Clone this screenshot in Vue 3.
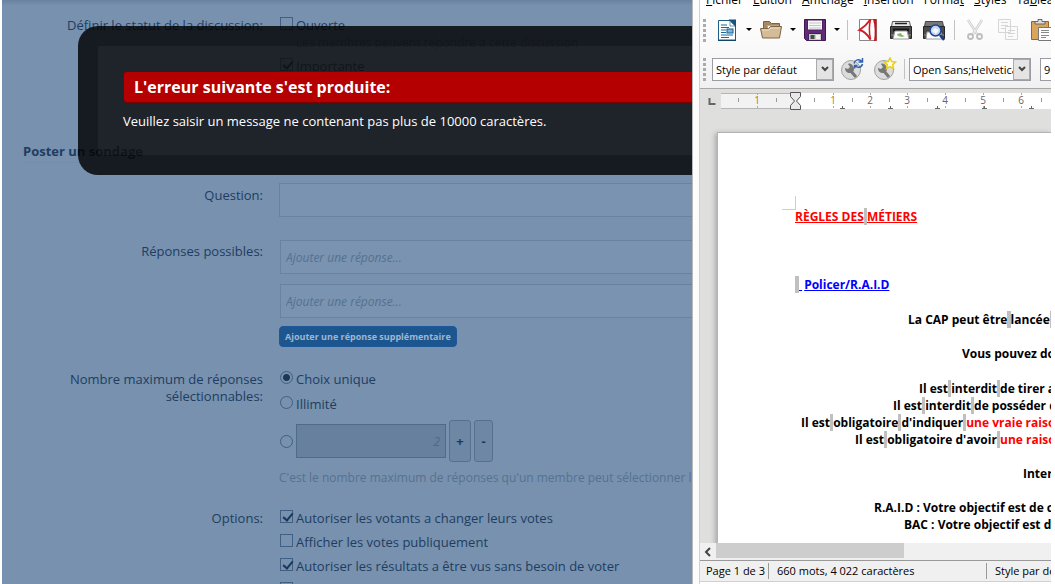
<script setup>
import { ref } from 'vue'

const statusOpen = ref(false)
const statusSticky = ref(true)
const maxMode = ref('single')

const options = ref([
  { id: 'change', text: 'Autoriser les votants a changer leurs votes', on: true },
  { id: 'public', text: 'Afficher les votes publiquement', on: false },
  { id: 'view', text: 'Autoriser les résultats a être vus sans besoin de voter', on: true },
  { id: 'close', text: '', on: false }
])

const menus = [
  ['', 'F', 'ichier'],
  ['', 'É', 'dition'],
  ['', 'A', 'ffichage'],
  ['', 'I', 'nsertion'],
  ['Forma', 't', ''],
  ['', 'S', 'tyles'],
  ['Ta', 'b', 'leau']
]

const rulerNumbers = [
  { x: 57, n: 1, warm: true },
  { x: 133, n: 1, warm: true },
  { x: 170, n: 2 },
  { x: 207, n: 3 },
  { x: 245, n: 4 },
  { x: 283, n: 5 },
  { x: 321, n: 6 }
]
const rulerTicks = [38, 76, 114, 152, 189, 227, 265, 303, 341]
const rulerTabs = [142, 190, 237, 284, 331]

const N = '\u00a0'
const lines = [
  { indent: 113, parts: [['La CAP peut être'], [N, 'nb'], ['lancée'], [N, 'nb']] },
  { blank: 'short' },
  { indent: 167, parts: [['Vous pouvez donc']] },
  { blank: 'tall' },
  { indent: 124, parts: [['Il est'], [N, 'nb'], ['interdit'], [N, 'nb'], ['de tirer a']] },
  { indent: 98, parts: [['Il est'], [N, 'nb'], ['interdit'], [N, 'nb'], ['de posséder d']] },
  { indent: 6, parts: [['Il est'], [N, 'nb'], ['obligatoire'], [N, 'nb'], ["d'indiquer"], [N, 'nb'], ['une vraie raison', 'red']] },
  { indent: 60, parts: [['Il est'], [N, 'nb'], ["obligatoire d'avoir"], [N, 'nb'], ['une raison', 'red']] },
  { blank: 'short' },
  { indent: 228, parts: [['Interdit']] },
  { blank: 'short' },
  { indent: 79, parts: [['R.A.I.D : Votre objectif est de c']] },
  { indent: 109, parts: [['BAC : Votre objectif est de']] }
]
</script>

<template>
  <main class="desktop">
    <section class="forum">
      <form class="form" @submit.prevent>
        <div class="row status">
          <span class="label">Définir le statut de la discussion:</span>
          <div class="field">
            <label class="choice"><input v-model="statusOpen" type="checkbox" />Ouverte</label>
            <p class="hint inset">Les membres peuvent répondre à cette discussion</p>
            <label class="choice sticky"><input v-model="statusSticky" type="checkbox" />Importante</label>
          </div>
        </div>

        <h3 class="heading">Poster un sondage</h3>

        <div class="row question">
          <label class="label drop" for="question">Question:</label>
          <div class="field bleed"><input id="question" class="text" type="text" /></div>
        </div>

        <div class="row answers">
          <label class="label drop" for="answer1">Réponses possibles:</label>
          <div class="field stack">
            <input id="answer1" class="text" type="text" placeholder="Ajouter une réponse..." />
            <input class="text" type="text" placeholder="Ajouter une réponse..." aria-label="Réponse 2" />
            <button type="button" class="add">Ajouter une réponse supplémentaire</button>
          </div>
        </div>

        <div class="row maximum">
          <span class="label">Nombre maximum de réponses sélectionnables:</span>
          <div class="field choices">
            <label class="choice"><input v-model="maxMode" type="radio" value="single" />Choix unique</label>
            <label class="choice"><input v-model="maxMode" type="radio" value="all" />Illimité</label>
            <div class="spin">
              <input v-model="maxMode" type="radio" value="some" aria-label="Nombre choisi" />
              <input class="text number" type="text" value="2" disabled aria-label="Nombre maximum" />
              <button type="button" class="step plus">+</button>
              <button type="button" class="step minus">-</button>
            </div>
            <p class="hint">C'est le nombre maximum de réponses qu'un membre peut sélectionner lorsqu'il vote.</p>
          </div>
        </div>

        <div class="row options">
          <span class="label">Options:</span>
          <div class="field optlist">
            <label v-for="o in options" :key="o.id" class="choice">
              <input v-model="o.on" type="checkbox" />{{ o.text }}
            </label>
          </div>
        </div>
      </form>

      <div class="overlay" role="alertdialog" aria-labelledby="err-title">
        <div class="overlay-body">
          <h2 id="err-title" class="error-title">L'erreur suivante s'est produite:</h2>
          <p class="error-text">Veuillez saisir un message ne contenant pas plus de 10000 caractères.</p>
        </div>
      </div>
    </section>

    <section class="writer">
      <header class="chrome">
        <nav class="menubar">
          <a v-for="m in menus" :key="m.join('')" href="#">{{ m[0] }}<u>{{ m[1] }}</u>{{ m[2] }}</a>
        </nav>

        <div class="toolbar">
          <span class="grip"></span>
          <button class="tool" aria-label="Nouveau">
            <svg viewBox="0 0 24 24"><path d="M3.500 2.500h12l5 4.500v15h-17z" fill="#fff" stroke="#1f5c85" /><path d="M13.500 1.500h7.500v8z" fill="#165379" /><path d="M15 3v5h5z" fill="#fff" stroke="#2a6c98" stroke-width=".7" /><path d="M6 7h6M6 9.500h8M6 12h5M6 14.500h5M6 17h12M6 19.500h8" stroke="#176aa1" stroke-width="1.200" /><rect x="12" y="11" width="6" height="4" fill="#7fb6dc" stroke="#145b8c" /><path d="M3 22.500h18" stroke="#124668" /></svg>
          </button>
          <svg class="arrow" viewBox="0 0 8 4"><path d="M1 0h6L4 3z" /></svg>
          <button class="tool" aria-label="Ouvrir">
            <svg viewBox="0 0 24 24"><path d="M4.500 18V3.500h6l2 2h8V18z" fill="#a88860" stroke="#7e6343" /><path d="M8.500 7.500h11v5h-11z" fill="#fff" stroke="#bda57f" /><path d="M1.500 10.500h8l2-2h11l-2 11.500h-17z" fill="#d3bc97" stroke="#806544" /><path d="M3 12h7l2-2h9" fill="none" stroke="#eadcc4" /></svg>
          </button>
          <svg class="arrow" viewBox="0 0 8 4"><path d="M1 0h6L4 3z" /></svg>
          <button class="tool" aria-label="Enregistrer">
            <svg viewBox="0 0 24 24"><path d="M1.500 1.500h21v21h-19l-2-2z" fill="#612c77" stroke="#3e164f" /><path d="M4.500 2h15v10h-15z" fill="#f8f8f8" stroke="#4e2160" /><path d="M6 5h12M6 7.500h12M6 10h12" stroke="#c5c5c5" /><path d="M5.500 15.500h13v7h-13z" fill="#c9ccc6" stroke="#45205a" /><path d="M7.500 17h4v4h-4z" fill="#3b5140" /><path d="M13 17h4v4h-4z" fill="#f3f4ef" /></svg>
          </button>
          <svg class="arrow" viewBox="0 0 8 4"><path d="M1 0h6L4 3z" /></svg>
          <span class="sep"></span>
          <button class="tool lead" aria-label="Exporter au format PDF">
            <svg viewBox="0 0 24 24"><path d="M3.500 1.500h17v21h-17z" fill="#fff" stroke="#8d8585" /><path d="M17 1h3.500v22H18c1-7 1-15-1-22z" fill="#c7161d" /><path d="M14.500 1.500C12 5 8 9 3.500 12c4 1 8 4.500 11 9.500" fill="none" stroke="#d01c24" stroke-width="2" /><path d="M14.500 1.500c-1.500 6-1.500 13 0 20" fill="none" stroke="#d01c24" stroke-width="1.500" /></svg>
          </button>
          <button class="tool wide" aria-label="Imprimer">
            <svg viewBox="0 0 24 24"><path d="M3.500 3.500h17l1 5h-19z" fill="#e8e8e8" stroke="#555" /><path d="M6 5.500h12" stroke="#222" stroke-width="1.500" /><path d="M1.500 8.500h21v12h-21z" fill="#4a4b49" stroke="#252525" /><path d="M4 10.500h16v3H4z" fill="#161616" /><path d="M2 17h20" stroke="#929292" /><path d="M6 13h12l2 8H4z" fill="#fff" stroke="#999" /><path d="m8 16 4-1 1 2 3 1-3 1-4-1z" fill="#7dbb62" /></svg>
          </button>
          <button class="tool wide" aria-label="Aperçu">
            <svg viewBox="0 0 24 24"><path d="M3.500 3.500h17l1 5h-19z" fill="#777" stroke="#444" /><path d="M1.500 8.500h21v12h-21z" fill="#4a4b49" stroke="#252525" /><path d="M2 17h20" stroke="#929292" /><path d="M5 14h14l1 7H4z" fill="#fff" stroke="#999" /><path d="m18 17 4 5" stroke="#183b80" stroke-width="2.500" /><circle cx="13.500" cy="12.500" r="5.500" fill="#c4d9ed" stroke="#1e4597" stroke-width="1.500" /><path d="m10 13 3-3 4 2-3 4z" fill="#f4f8fb" /></svg>
          </button>
          <span class="sep"></span>
          <button class="tool lead" aria-label="Couper" disabled>
            <svg viewBox="0 0 24 24" fill="none"><path d="m5 2 9 14M19 2l-9 14" stroke="#cfcfcf" stroke-width="2.500" /><path d="m5 2 9 14M19 2l-9 14" stroke="#f1f1f1" /><circle cx="7.500" cy="18.500" r="2.500" stroke="#bdbdbd" stroke-width="1.800" /><circle cx="16.500" cy="18.500" r="2.500" stroke="#bdbdbd" stroke-width="1.800" /></svg>
          </button>
          <button class="tool wide" aria-label="Copier" disabled>
            <svg viewBox="0 0 24 24"><path d="M2.500 1.500h12v13h-12zM9.500 8.500h12v13h-12z" fill="#fafafa" stroke="#d6d6d6" /><path d="M5 4.500h7M5 7.500h7M5 10.500h4M12 12.500h7M12 15.500h7M12 18.500h5" stroke="#d6d6d6" /></svg>
          </button>
          <button class="tool wide" aria-label="Coller">
            <svg viewBox="0 0 24 24"><path d="M2.500 3.500h17v18h-17z" fill="#d9a45c" stroke="#97642a" /><path d="M6 5V3.500h3v-2h4v2h3V6H6z" fill="#ddd" stroke="#666" /><path d="M9.500 9.500h13v13h-13z" fill="#fff" stroke="#777" /><path d="M12 12.500h8M12 14.500h8M12 17.500h8M12 19.500h5" stroke="#888" /></svg>
          </button>
        </div>

        <div class="toolbar second">
          <span class="grip"></span>
          <span class="combo">
            <select aria-label="Style de paragraphe"><option>Style par défaut</option></select>
            <span class="drop-button"><svg viewBox="0 0 8 6"><path d="m1 1 3 3 3-3" /></svg></span>
          </span>
          <button class="tool" aria-label="Actualiser le style">
            <svg viewBox="0 0 24 24"><circle cx="11" cy="13" r="9.500" fill="#dcdcdc" stroke="#a2a2a2" /><path d="m10 13 6 7" stroke="#777" stroke-width="3" /><path d="M5 11c0 3 2 5 5 5 4 0 5-4 3-7-1-2-3-3-5-2l2 3-2 2z" fill="#777" /><path d="M14 6.500c1-4 5-5 8-2M22.500 1v4h-4M22.500 7c-1 4-5 4-8 2M14.500 11.500V8.500h3" fill="none" stroke="#2e63b0" stroke-width="1.500" /></svg>
          </button>
          <button class="tool wide" aria-label="Nouveau style">
            <svg viewBox="0 0 24 24"><circle cx="11" cy="13" r="9.500" fill="#dcdcdc" stroke="#a2a2a2" /><path d="m10 13 6 7" stroke="#777" stroke-width="3" /><path d="M5 11c0 3 2 5 5 5 4 0 5-4 3-7-1-2-3-3-5-2l2 3-2 2z" fill="#777" /><path d="m17 1 1.700 3.500 4 .500-3 2.600.8 4-3.500-2-3.500 2 .8-4-3-2.600 4-.500z" fill="#fffde8" stroke="#e8cf13" stroke-width="1.500" /></svg>
          </button>
          <span class="sep"></span>
          <span class="combo font">
            <select aria-label="Police"><option>Open Sans;Helvetica</option></select>
            <span class="drop-button"><svg viewBox="0 0 8 6"><path d="m1 1 3 3 3-3" /></svg></span>
          </span>
          <span class="combo">
            <select aria-label="Taille"><option>9</option></select>
          </span>
        </div>
      </header>

      <div class="ruler">
        <svg width="700" height="24">
          <path d="M9.500 9v6h6" fill="none" stroke="#666" stroke-width="2" />
          <rect x="21" y="4" width="75" height="15" fill="#f2f2f2" />
          <path d="M21 4.500h75M21 19.500h75" stroke="#b5b5b5" />
          <rect x="96" y="4" width="604" height="16" fill="#fff" />
          <path v-for="t in rulerTicks" :key="'t' + t" :d="`M${t}.5 9v4`" stroke="#999" />
          <path v-for="n in rulerNumbers" :key="'m' + n.x" :d="`M${n.x}.5 4v2M${n.x}.5 17v2`" stroke="#aaa" />
          <path v-for="t in rulerTabs" :key="'b' + t" :d="`M${t}.5 17v3M${t - 2} 19.500h5`" stroke="#666" />
          <text v-for="n in rulerNumbers" :key="n.x" :x="n.x" y="15" :class="{ warm: n.warm }">{{ n.n }}</text>
          <path d="M90.500 3.500h10v4l-4 4.500 4 4.500v4h-10v-4l4-4.500-4-4.500z" fill="#e9e9e9" stroke="#555" />
        </svg>
      </div>

      <div class="canvas">
        <article class="page">
          <i class="corner"></i>
          <h1 class="line title"><span>RÈGLES DES<b class="nb">&nbsp;</b>MÉTIERS</span></h1>
          <p class="line link"><b class="nb wide-nb">&nbsp;</b><a href="#">&nbsp;</a><a class="policer" href="#">Policer/R.A.I.D</a></p>
          <template v-for="(l, i) in lines" :key="i">
            <div v-if="l.blank" :class="['blank', l.blank]"></div>
            <p v-else class="line" :style="{ paddingLeft: l.indent + 'px' }"><span v-for="(p, k) in l.parts" :key="k" :class="p[1]">{{ p[0] }}</span></p>
          </template>
        </article>
      </div>

      <div class="scrollbar">
        <button aria-label="Défiler à gauche"><svg viewBox="0 0 8 10"><path d="M6 1 2 5l4 4" /></svg></button>
        <span class="thumb"></span>
      </div>
      <footer class="statusbar">
        <span class="pages">Page 1 de 3</span>
        <span class="words">660 mots, 4 022 caractères</span>
        <span class="style">Style par défaut</span>
      </footer>
    </section>
  </main>
</template>

<style>
body { background: #fff; }
</style>

<style scoped>
* { box-sizing: border-box; }
h1, h2, h3, p { margin: 0; }
button { padding: 0; font-family: inherit; }

.desktop {
  display: grid;
  grid-template-columns: 690fr 359fr;
  height: 100vh;
  padding: 0 4px 0 2px;
  overflow: hidden;
  font-family: "Open Sans", "Noto Sans", sans-serif;
}

/* forum form */
.forum {
  position: relative;
  min-width: 0;
  overflow: hidden;
  background: linear-gradient(#68829f, #7791af 6px);
  color: #1f3d60;
  font-size: 13px;
  line-height: 17px;
}
.form { padding-top: 17px; }
.row {
  display: grid;
  grid-template-columns: 261px 1fr;
  column-gap: 16px;
}
.label { padding-left: 60px; text-align: right; }
.drop { padding-top: 4px; }
.answers .drop { padding-top: 3px; }
.field { min-width: 0; }
.bleed { margin-right: -2px; }
.choice { display: flex; gap: 3px; height: 17px; white-space: nowrap; }
input[type="checkbox"], input[type="radio"] {
  appearance: none;
  flex: none;
  position: relative;
  width: 13px;
  height: 13px;
  margin: 0 0 0 1px;
  border: 1px solid #3f5f84;
}
input[type="radio"] { border-radius: 50%; }
input[type="checkbox"]:checked::after {
  content: "";
  position: absolute;
  left: 4px;
  top: 0;
  width: 4px;
  height: 8px;
  border: solid #1b3859;
  border-width: 0 2px 2px 0;
  transform: rotate(40deg);
}
input[type="radio"]:checked { background: radial-gradient(circle, #1b3859 3px, transparent 4px); }
.hint { font-size: 12px; line-height: 16px; color: #56718f; white-space: nowrap; }
.inset { padding: 1px 0 0 17px; }
.sticky { margin-top: 7px; }
.status { height: 126px; }
.heading {
  margin-left: 21px;
  padding-bottom: 2px;
  border-bottom: 1px solid #738dab;
  font-size: 13px;
  line-height: 17px;
  font-weight: 700;
}
.question { margin-top: 20px; }
.answers { margin-top: 23px; }
.text {
  display: block;
  width: 100%;
  height: 34px;
  padding: 0 5px;
  border: 1px solid #6882a0;
  background: #7993b1;
  color: #1f3d60;
  font-family: inherit;
  font-size: 12px;
}
.text::placeholder { color: #56718f; font-style: italic; opacity: 1; }
.stack { display: flex; flex-direction: column; gap: 10px; }
.stack .text { margin-left: 1px; }
.add {
  align-self: flex-start;
  height: 21px;
  margin-top: -2px;
  padding: 0 5px;
  border: 1px solid #1c579a;
  border-radius: 4px;
  background: #1d568f;
  color: #9db7d1;
  font-size: 9px;
  font-weight: 700;
}
.maximum { margin-top: 24px; }
.choices { display: flex; flex-direction: column; gap: 8px; }
.spin { display: flex; align-items: center; height: 42px; margin-top: -1px; }
.number {
  width: 150px;
  margin: 0 3px;
  background: #67809d;
  border-color: #4f6b8b;
  text-align: right;
  font-style: italic;
  color: #4e6988;
}
.step {
  height: 42px;
  border: 1px solid #56718f;
  border-radius: 3px;
  background: #6d87a5;
  color: #1b3859;
  font-size: 13px;
  font-weight: 700;
}
.plus { width: 22px; margin-right: 3px; }
.minus { width: 19px; }
.options { margin-top: 24px; }
.optlist { display: flex; flex-direction: column; gap: 7px; }

/* error dialog lying over the form */
.overlay {
  position: absolute;
  top: 26px;
  left: 76px;
  right: -40px;
  padding: 20px;
  border-radius: 20px;
  background: rgba(1, 1, 2, .82);
}
.overlay-body {
  height: 109px;
  padding: 25px 0 0 25px;
  background: rgba(255, 255, 255, .04);
  color: #fff;
}
.error-title {
  height: 32px;
  padding: 0 10px;
  border: 1px solid #780000;
  border-radius: 4px;
  background: #b40000;
  font-size: 16px;
  line-height: 30px;
}
.error-text { margin-top: 10px; font-size: 13px; white-space: nowrap; }

/* word processor */
.writer {
  display: flex;
  flex-direction: column;
  min-width: 0;
  overflow: hidden;
  padding: 0 0 2px 7px;
  border-left: 1px solid #b9b9b9;
  box-shadow: inset 6px 0 #fcfcfc, inset 7px 0 #d0d0d0;
  font-size: 12px;
  color: #000;
}
.chrome {
  flex: none;
  height: 89px;
  border-bottom: 1px solid #a8a8a8;
  background: linear-gradient(#fff, #f9f9f9 50px, #f0f0f0);
  overflow: hidden;
}
.menubar { display: flex; gap: 10px; height: 18px; margin-top: -9px; padding-left: 6px; line-height: 18px; font-size: 12px; }
.menubar a { color: #000; text-decoration: none; }
.toolbar { display: flex; align-items: center; gap: 6px; height: 42px; padding-left: 3px; }
.toolbar > * { flex: none; }
.grip {
  width: 3px;
  height: 23px;
  margin-right: 3px;
  background: repeating-linear-gradient(#aaa 0 3px, transparent 3px 5px);
}
.tool { width: 24px; height: 24px; border: 0; background: none; }
.tool svg { display: block; width: 24px; height: 24px; }
.lead { margin-left: 2px; }
.wide { margin-left: 3px; }
.wide + .sep { margin-left: 2px; }
.arrow { width: 8px; height: 4px; }
.sep { width: 1px; height: 20px; background: #c2c2c2; }
.second { height: 36px; }
.second .grip { margin-right: 0; }
.second .wide + .sep { margin-left: 1px; }
.combo { position: relative; width: 122px; height: 23px; }
.combo select {
  appearance: none;
  width: 100%;
  height: 23px;
  padding: 0 3px;
  border: 1px solid #9a9da3;
  border-radius: 0;
  background: #fff;
  color: #000;
  font-family: inherit;
  font-size: 11px;
}
.drop-button {
  position: absolute;
  top: 1px;
  right: 1px;
  display: grid;
  place-items: center;
  width: 17px;
  height: 21px;
  border: 1px solid #aaa;
  background: #e4e4e4;
  pointer-events: none;
}
.drop-button svg { width: 8px; height: 6px; fill: none; stroke: #444; stroke-width: 2; }
.font { margin-right: 3px; margin-left: -2px; }

.ruler { flex: none; height: 24px; overflow: hidden; background: #dfdfde; }
.ruler svg { display: block; }
.ruler text { font-size: 10px; text-anchor: middle; fill: #666; }
.ruler .warm { fill: #b8772f; }

.canvas { flex: 1; min-height: 0; overflow: hidden; padding: 19px 0 0 17px; background: #dfdfde; }
.page {
  position: relative;
  height: 900px;
  padding: 75px 0 0 77px;
  border: 1px solid #b4b4b4;
  border-right: 0;
  background: #fff;
  box-shadow: -2px 1px 5px #aaa;
}
.corner {
  position: absolute;
  left: 64px;
  top: 63px;
  width: 14px;
  height: 14px;
  border: solid #cfcfcf;
  border-width: 0 1px 1px 0;
}
.line { height: 17px; line-height: 17px; font-size: 12px; font-weight: 700; white-space: nowrap; }
.blank { height: 17px; }
.tall { height: 18px; }
.nb { display: inline-block; background: #c0c0c0; }
.title span { color: #f00; text-decoration: underline; }
.red { color: #f00; }
.link { height: 35px; margin-top: 51px; }
.link a { color: #00f; }
.wide-nb { width: 4px; }
.policer { margin-left: 2px; }

.scrollbar { display: flex; flex: none; height: 17px; padding-bottom: 2px; background: #f0f0f0; }
.scrollbar button { width: 16px; border: 0; background: none; }
.scrollbar svg { width: 8px; height: 10px; fill: none; stroke: #444; stroke-width: 2; }
.thumb { width: 188px; background: #cdcdcd; }
.statusbar {
  display: flex;
  align-items: center;
  flex: none;
  height: 22px;
  border-top: 1px solid #999;
  border-bottom: 1px solid #d0d0d0;
  background: #f0f0f0;
  font-size: 11px;
  white-space: nowrap;
  overflow: hidden;
}
.statusbar span { flex: none; line-height: 16px; }
.pages { width: 69px; padding-left: 6px; border-right: 1px solid #999; }
.words { width: 218px; padding-left: 8px; border-right: 1px solid #999; }
.style { padding-left: 8px; }
</style>
